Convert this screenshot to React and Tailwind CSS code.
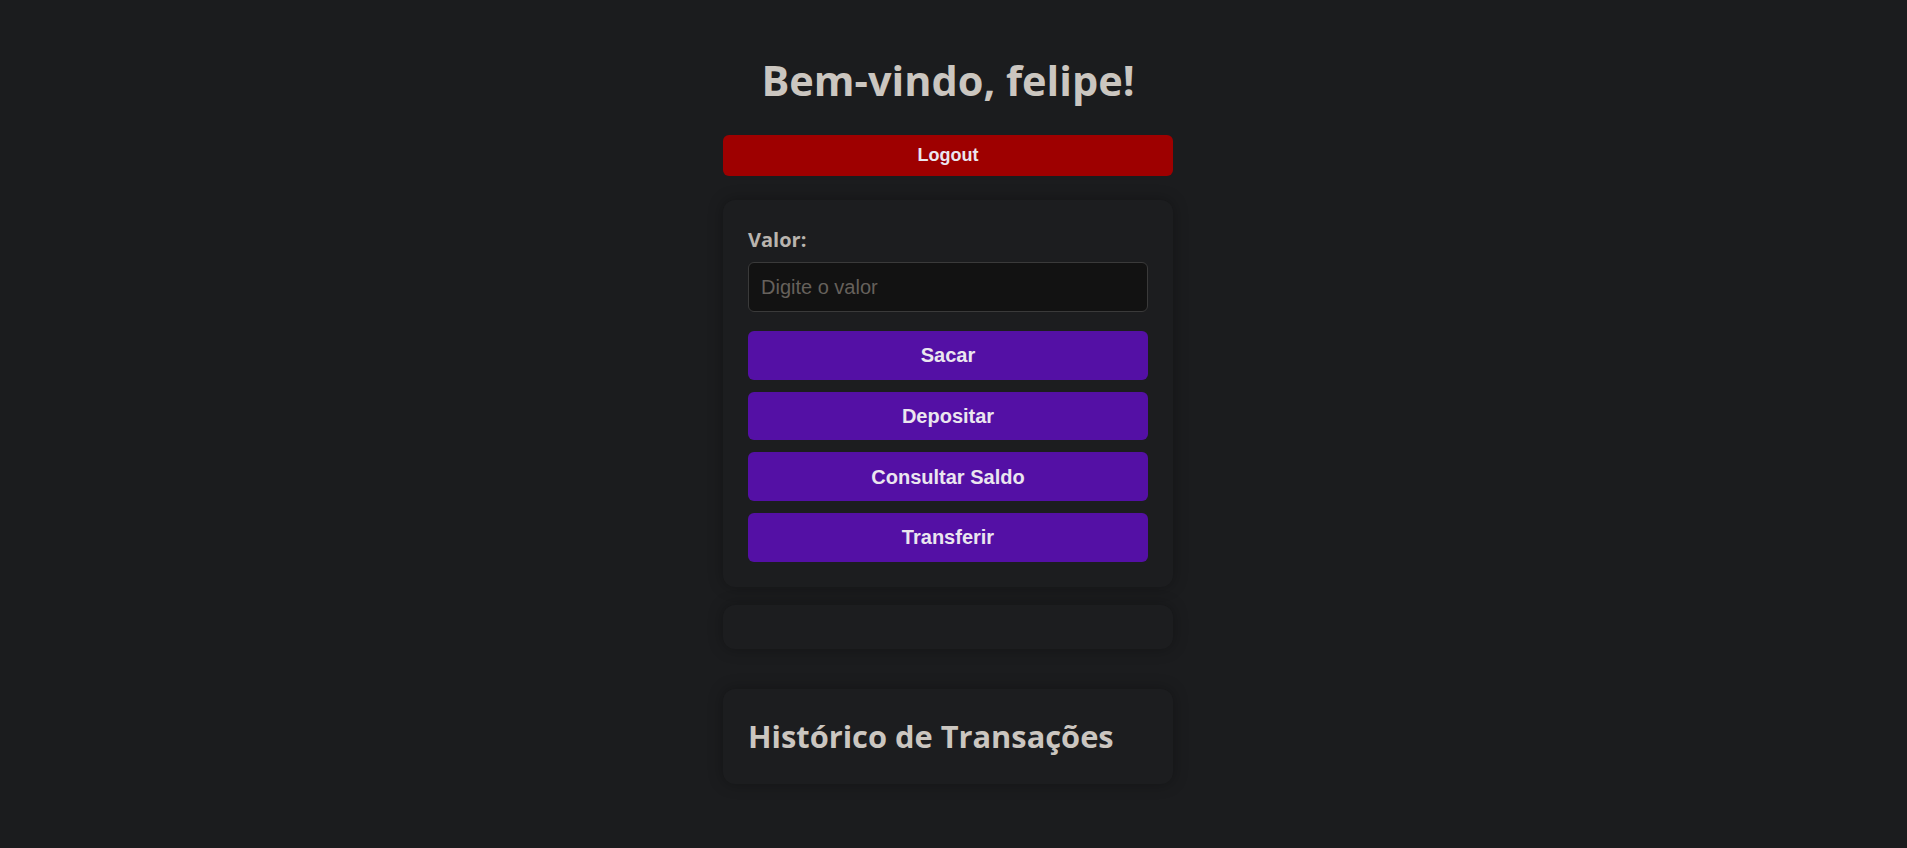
export default function App() {
  const heading = { fontFamily: '"Open Sans", "Noto Sans", sans-serif' };
  const arial = { fontFamily: '"Liberation Sans", Arial, sans-serif' };
  return (
    <div className="min-h-[848px] w-full bg-[#1b1c1e] flex justify-center pr-[11px]">
      <div className="w-[450px] flex flex-col pt-[50px]">
        <h1
          className="text-center text-[41.5px] leading-[60px] font-bold text-[#cbc6c0]"
          style={heading}
        >
          Bem-vindo, felipe!
        </h1>
        <button
          className="mt-[25px] h-[41px] w-full rounded-md bg-[#9e0000] text-[18px] font-bold text-[#ebe6ef]"
          style={arial}
        >
          Logout
        </button>
        <div className="mt-[24px] rounded-xl bg-[#1c1d1f] px-[25px] pb-[25px] pt-[27px] shadow-[0_0_15px_rgba(0,0,0,0.3)]">
          <label
            className="block text-[20px] leading-[24px] font-bold text-[#b9b4ae] mt-[1px]"
            style={heading}
          >
            Valor:
          </label>
          <input
            placeholder="Digite o valor"
            className="mt-[10px] block h-[50px] w-full rounded-md border border-[#3a3a3a] bg-[#121212] px-[12px] text-[20px] text-[#cbc6c0] placeholder:text-[#66615c] outline-none"
            style={arial}
          />
          <div className="mt-[19px] flex flex-col gap-[12px]">
            {["Sacar", "Depositar", "Consultar Saldo", "Transferir"].map((t) => (
              <button
                key={t}
                className="h-[48.67px] w-full rounded-md bg-[#5410a5] text-[20px] font-bold text-[#ebe6ef]"
                style={arial}
              >
                {t}
              </button>
            ))}
          </div>
        </div>
        <div className="mt-[18px] h-[44px] rounded-xl bg-[#1c1d1f] shadow-[0_0_15px_rgba(0,0,0,0.3)]" />
        <div className="mt-[40px] rounded-xl bg-[#1c1d1f] px-[25px] pt-[25px] pb-[25px] shadow-[0_0_15px_rgba(0,0,0,0.3)]">
          <h2
            className="text-[30.8px] leading-[45px] font-bold text-[#cbc6c0]"
            style={heading}
          >
            Histórico de Transações
          </h2>
        </div>
      </div>
    </div>
  );
}
